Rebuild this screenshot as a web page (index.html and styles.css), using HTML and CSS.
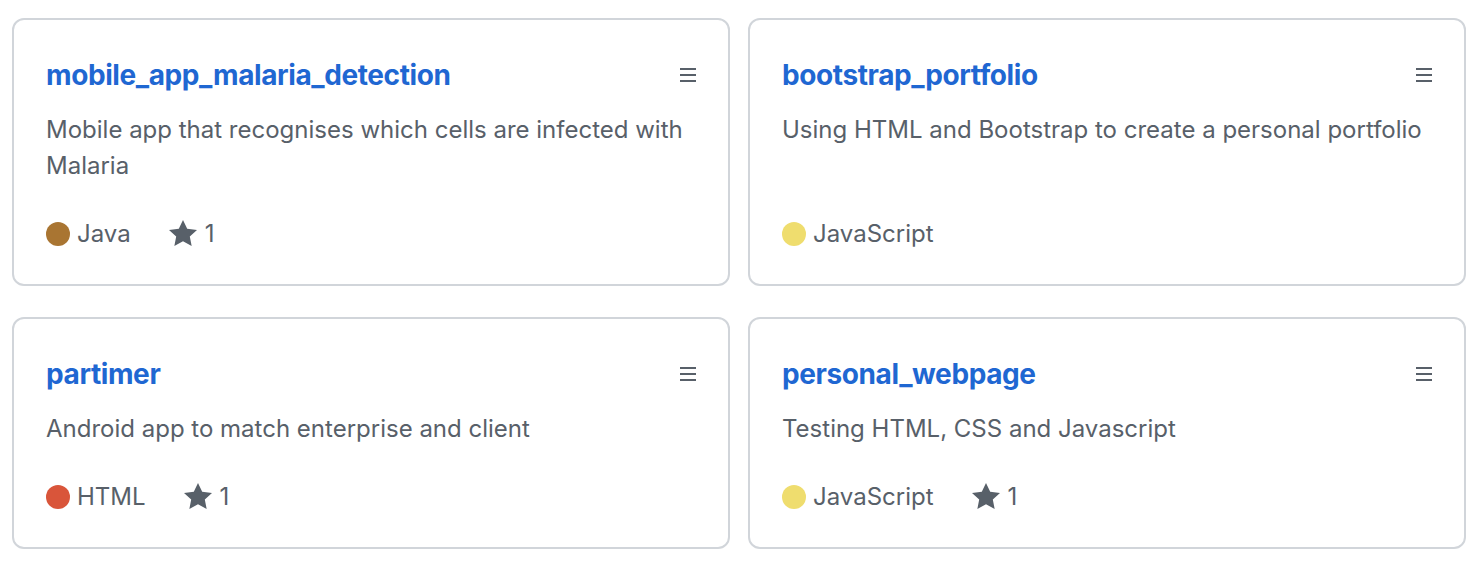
FILE: index.html
```html
<!DOCTYPE html>
<html>
<head>
<meta charset="utf-8">
<link rel="stylesheet" href="styles.css">
</head>
<body>
<div class="pins">
  <div class="card">
    <div class="head">
      <a class="title" href="#">mobile_app_malaria_detection</a>
      <svg class="grab" viewBox="0 0 8 16" width="16" height="32"><path d="M8 4v1H0V4h8zM0 8h8V7H0v1zm0 3h8v-1H0v1z"/></svg>
    </div>
    <p class="desc">Mobile app that recognises which cells are infected with Malaria</p>
    <p class="meta">
      <span class="lang"><span class="dot java"></span>Java</span>
      <span class="stars"><svg class="star" viewBox="0 0 14 16" width="28" height="32"><path d="M14 6l-4.9-.64L7 1 4.9 5.36 0 6l3.6 3.26L2.67 14 7 11.67 11.33 14l-.93-4.74L14 6z"/></svg>1</span>
    </p>
  </div>
  <div class="card">
    <div class="head">
      <a class="title" href="#">bootstrap_portfolio</a>
      <svg class="grab" viewBox="0 0 8 16" width="16" height="32"><path d="M8 4v1H0V4h8zM0 8h8V7H0v1zm0 3h8v-1H0v1z"/></svg>
    </div>
    <p class="desc">Using HTML and Bootstrap to create a personal portfolio</p>
    <p class="meta">
      <span class="lang"><span class="dot js"></span>JavaScript</span>
    </p>
  </div>
  <div class="card">
    <div class="head">
      <a class="title" href="#">partimer</a>
      <svg class="grab" viewBox="0 0 8 16" width="16" height="32"><path d="M8 4v1H0V4h8zM0 8h8V7H0v1zm0 3h8v-1H0v1z"/></svg>
    </div>
    <p class="desc">Android app to match enterprise and client</p>
    <p class="meta">
      <span class="lang"><span class="dot html"></span>HTML</span>
      <span class="stars"><svg class="star" viewBox="0 0 14 16" width="28" height="32"><path d="M14 6l-4.9-.64L7 1 4.9 5.36 0 6l3.6 3.26L2.67 14 7 11.67 11.33 14l-.93-4.74L14 6z"/></svg>1</span>
    </p>
  </div>
  <div class="card">
    <div class="head">
      <a class="title" href="#">personal_webpage</a>
      <svg class="grab" viewBox="0 0 8 16" width="16" height="32"><path d="M8 4v1H0V4h8zM0 8h8V7H0v1zm0 3h8v-1H0v1z"/></svg>
    </div>
    <p class="desc">Testing HTML, CSS and Javascript</p>
    <p class="meta">
      <span class="lang"><span class="dot js"></span>JavaScript</span>
      <span class="stars"><svg class="star" viewBox="0 0 14 16" width="28" height="32"><path d="M14 6l-4.9-.64L7 1 4.9 5.36 0 6l3.6 3.26L2.67 14 7 11.67 11.33 14l-.93-4.74L14 6z"/></svg>1</span>
    </p>
  </div>
</div>
</body>
</html>
```
FILE: styles.css
```css
html, body {
  margin: 0;
  padding: 0;
  background: #ffffff;
}
body {
  font-family: Inter, "Noto Sans", "Liberation Sans", sans-serif;
  color: #586069;
}
.pins {
  display: grid;
  grid-template-columns: 718px 718px;
  column-gap: 18px;
  row-gap: 31px;
  padding: 18px 14px 0 12px;
}
.card {
  border: 2px solid #d1d5da;
  border-radius: 12px;
  padding: 34px 32px 32px;
  display: flex;
  flex-direction: column;
}
.head {
  display: flex;
  align-items: flex-start;
  justify-content: space-between;
}
.title {
  font-size: 28px;
  font-weight: 700;
  letter-spacing: -0.4px;
  line-height: 42px;
  color: #1f67d2;
  text-decoration: none;
}
.grab {
  fill: #586069;
  margin-top: 6px;
}
.desc {
  flex: 1;
  margin: 16px 0 32px;
  font-size: 24px;
  line-height: 36px;
}
.meta {
  margin: 0;
  font-size: 24px;
  line-height: 36px;
  display: flex;
  align-items: center;
}
.lang {
  display: inline-flex;
  align-items: center;
  margin-right: 38px;
}
.dot {
  width: 24px;
  height: 24px;
  border-radius: 50%;
  margin-right: 7px;
}
.java { background: #a97532; }
.js { background: #efdd6e; }
.html { background: #d9553a; }
.stars {
  display: inline-flex;
  align-items: center;
}
.star {
  fill: #586069;
  margin-right: 8px;
}
```
